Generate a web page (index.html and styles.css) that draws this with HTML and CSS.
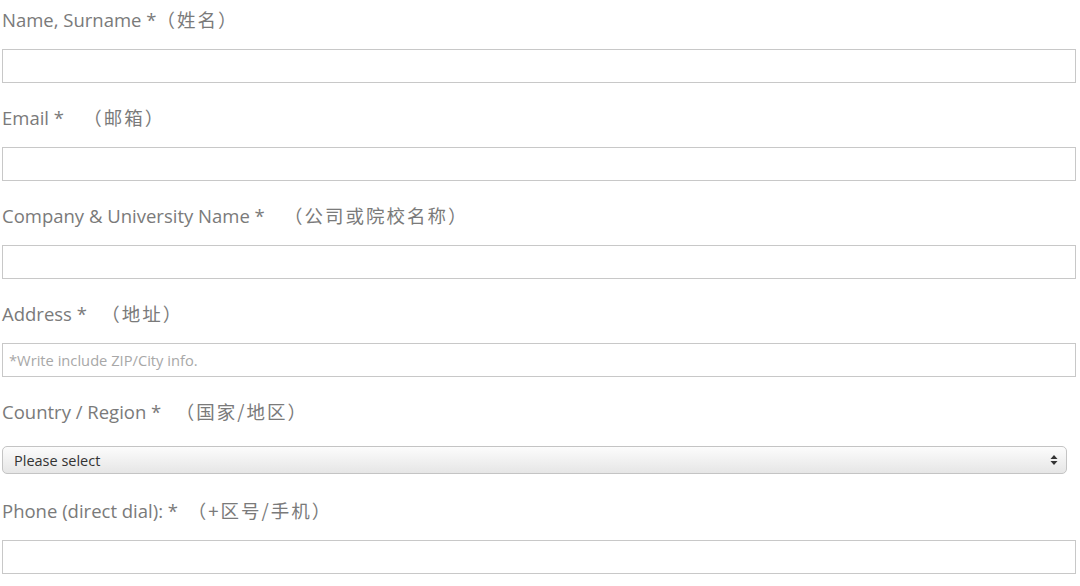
FILE: index.html
```html
<!DOCTYPE html>
<html lang="zh">
<head>
<meta charset="utf-8">
<link rel="stylesheet" href="styles.css">
</head>
<body>
<form class="form">
  <div class="field">
    <label class="label">Name, Surname *<span class="cjk">（姓名）</span></label>
    <input class="input" type="text">
  </div>
  <div class="field">
    <label class="label">Email * &nbsp; &nbsp;<span class="cjk">（邮箱）</span></label>
    <input class="input" type="text">
  </div>
  <div class="field">
    <label class="label">Company &amp; University Name * &nbsp; &nbsp;<span class="cjk">（公司或院校名称）</span></label>
    <input class="input" type="text">
  </div>
  <div class="field">
    <label class="label">Address * &nbsp; <span class="cjk">（地址）</span></label>
    <input class="input" type="text" placeholder="*Write include ZIP/City info.">
  </div>
  <div class="field field-select">
    <label class="label">Country / Region * &nbsp; <span class="cjk">（国家/地区）</span></label>
    <div class="select">
      <span class="select-text">Please select</span>
      <svg class="select-arrows" width="8" height="12" viewBox="0 0 8 12"><path d="M4 1 L7.5 5 L0.5 5 Z M4 11 L7.5 7 L0.5 7 Z" fill="#333"/></svg>
    </div>
  </div>
  <div class="field">
    <label class="label">Phone (direct dial): * &nbsp;<span class="cjk">（+区号/手机）</span></label>
    <input class="input" type="text">
  </div>
</form>
</body>
</html>
```
FILE: styles.css
```css
html, body {
  margin: 0;
  padding: 0;
  background: #fff;
}
.form {
  display: flex;
  flex-direction: column;
  padding-left: 2px;
  width: 1074px;
}
.field {
  display: flex;
  flex-direction: column;
  margin-bottom: 15px;
}
.label {
  font-family: "Open Sans", "Noto Sans CJK SC", sans-serif;
  font-size: 18.5px;
  line-height: 38px;
  height: 38px;
  color: #7a7a7a;
  margin-bottom: 11px;
  white-space: pre;
}
.cjk {
  font-family: "Noto Sans CJK SC", sans-serif;
  font-weight: 400;
  letter-spacing: 2px;
}
.input {
  box-sizing: border-box;
  height: 34px;
  width: 1074px;
  margin: 0;
  border: 1.5px solid #c8c8c8;
  border-radius: 0;
  padding: 0 6px;
  font-family: "Open Sans", sans-serif;
  font-size: 14.7px;
  background: #fff;
  outline: none;
}
.input::placeholder {
  color: #a8a8a8;
}
.field-select {
  margin-bottom: 17px;
}
.field-select .label {
  margin-bottom: 16px;
}
.select {
  box-sizing: border-box;
  height: 28px;
  width: 1065px;
  border: 1px solid #c4c4c4;
  border-radius: 5px;
  background: linear-gradient(#fcfcfc, #e6e6e6);
  display: flex;
  align-items: center;
  justify-content: space-between;
  padding: 0 8px 0 11px;
}
.select-text {
  font-family: "Open Sans", sans-serif;
  font-size: 14.5px;
  color: #333;
}
.select-arrows {
  display: block;
}
```
